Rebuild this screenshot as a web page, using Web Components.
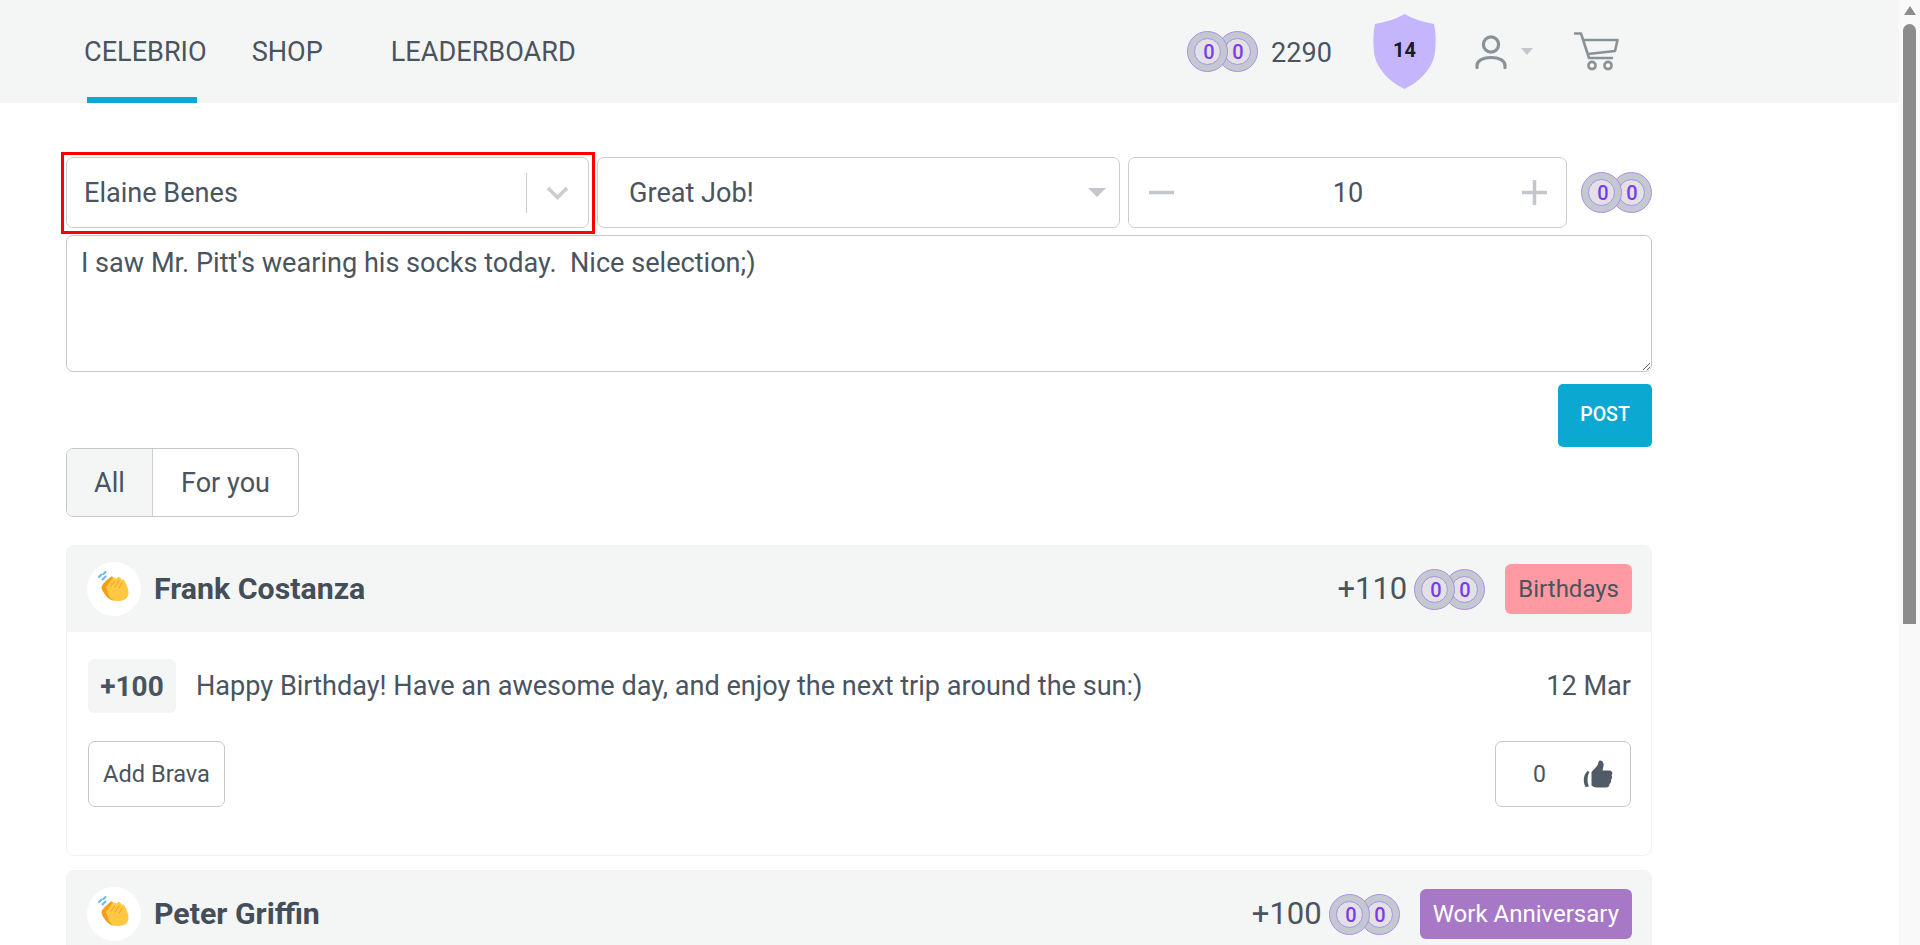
<!DOCTYPE html>
<html lang="en">
<head>
<meta charset="utf-8">
<title>Celebrio</title>
<style>
  html, body { margin: 0; height: 100%; overflow: hidden; }
  body { font-family: Roboto, "Liberation Sans", sans-serif; color: #4a545e; background: #fff; }
</style>
</head>
<body>
<app-shell>
  <top-nav coins="2290" level="14"></top-nav>
  <brava-form></brava-form>
  <feed-tabs></feed-tabs>
  <brava-card name="Frank Costanza" total="+110" tag="Birthdays" tag-color="#ff9aa2" tag-text="#4a545e" points="+100" date="12 Mar" likes="0">
    Happy Birthday! Have an awesome day, and enjoy the next trip around the sun:)
  </brava-card>
  <brava-card name="Peter Griffin" total="+100" tag="Work Anniversary" tag-color="#a678c6" tag-text="#fff"></brava-card>
</app-shell>

<script>
class CoinStack extends HTMLElement {
  constructor() {
    super();
    this.attachShadow({ mode: 'open' });
    this.shadowRoot.innerHTML = `
      <style>
        :host { display: inline-block; width: 71px; height: 41px; flex: none; }
        svg { display: block; }
        text { font: 500 20px Roboto, sans-serif; fill: #7c3aed; text-anchor: middle; }
      </style>
      <svg width="71" height="41" viewBox="0 0 71 41">
        <g>
          <circle cx="50.5" cy="20.5" r="20" fill="#c4c8d0" stroke="#a98fe8"/>
          <circle cx="50.5" cy="20.5" r="13" fill="#e2e1e6" stroke="#a98fe8"/>
          <text x="51" y="27.500">0</text>
        </g>
        <g>
          <circle cx="20.5" cy="20.5" r="20" fill="#c4c8d0" stroke="#a98fe8"/>
          <circle cx="20.5" cy="20.5" r="13" fill="#e2e1e6" stroke="#a98fe8"/>
          <text x="22" y="27.500">0</text>
        </g>
      </svg>
    `;
  }
}

class ClapIcon extends HTMLElement {
  constructor() {
    super();
    this.attachShadow({ mode: 'open' });
    this.shadowRoot.innerHTML = `
      <style>
        :host { display: block; width: 54px; height: 54px; border-radius: 50%; background: #fff; flex: none; }
        svg { display: block; }
      </style>
      <svg width="54" height="54" viewBox="0 0 54 54">
        <path d="M12 15l2.500-2.500M15.500 17.500l3-3M16.500 12l2-2" stroke="#6cb6f0" stroke-width="2" stroke-linecap="round" fill="none"/>
        <g transform="translate(-1 -2)">
          <path d="M15.500 26.500c1.500-3.500 5.500-6.500 9.500-10 2-.5 2.500 1.500 2 3.500l3 20.500c-5 .5-9-2.500-12-7.500-1.500-2-2.500-4-2.500-6.500z" fill="#f59e16"/>
          <path d="M20 27l6-8c1-2 3-2 4 0l1-1c1-2 4-1 4 1l1 1c1-1 3 0 3 2 2 3 3.500 7 3.500 11 0 5-4.500 8-9.500 8-5 0-8-2-10-5z" fill="#ffc843"/>
          <path d="M25 26l4-5M29 27l4-6M33 28l3-5" stroke="#f0a020" stroke-width="1" stroke-linecap="round" fill="none"/>
        </g>
      </svg>
    `;
  }
}

class TopNav extends HTMLElement {
  constructor() {
    super();
    this.attachShadow({ mode: 'open' });
  }

  connectedCallback() {
    this.shadowRoot.innerHTML = `
      <style>
        :host { display: flex; align-items: center; height: 103px; background: #f4f6f6; padding: 0 280px 0 84px; font-size: 27.100px; color: #4a545e; }
        .tab { position: relative; height: 103px; line-height: 105px; }
        .tab.active::after { content: ""; position: absolute; left: 3px; bottom: 0; width: 110px; height: 6px; background: #0ba8d2; }
        .shop { margin-left: 45px; }
        .board { margin-left: 68px; }
        .right { margin-left: auto; display: flex; align-items: center; }
        .count { margin-left: 13px; line-height: 36px; padding-top: 2px; }
        .shield { position: relative; margin-left: 41px; width: 63px; height: 75px; }
        .shield span { position: absolute; inset: 0 0 4px; display: flex; align-items: center; justify-content: center; font-weight: 700; font-size: 20px; color: #1b1b26; }
        .user { margin-left: 39px; }
        .caret { margin-left: 14px; width: 0; height: 0; border: 6.5px solid transparent; border-top: 7px solid #c3c7cb; border-bottom: 0; }
        .cart { margin-left: 41px; }
        svg { display: block; }
      </style>
      <div class="tab active">CELEBRIO</div>
      <div class="tab shop">SHOP</div>
      <div class="tab board">LEADERBOARD</div>
      <div class="right">
        <coin-stack></coin-stack>
        <div class="count">${this.getAttribute('coins')}</div>
        <div class="shield">
          <svg width="63" height="75" viewBox="0 0 63 75"><path d="M31.500 0C40 5 50 8 61 10c2 8 2 18 1 28C60 55 46 68 31.500 75 17 68 3 55 1 38 0 28 0 18 2 10 13 8 23 5 31.500 0z" fill="#c4b5fd"/></svg>
          <span>${this.getAttribute('level')}</span>
        </div>
        <svg class="user" width="32" height="34" viewBox="0 0 32 34" fill="none" stroke="#8a9197" stroke-width="3.200" stroke-linecap="round">
          <circle cx="16" cy="9.500" r="7.600"/>
          <path d="M2 32.500v-2c0-5 6-8 14-8s14 3 14 8v2"/>
        </svg>
        <div class="caret"></div>
        <svg class="cart" width="45" height="39" viewBox="0 0 45 39" fill="none" stroke="#8a9197" stroke-width="2.600" stroke-linejoin="round">
          <path d="M0 1.500h7l8 24.500h24"/>
          <path d="M9.500 8H43.500l-2.500 11-27 3"/>
          <circle cx="18" cy="33.500" r="3.600"/>
          <circle cx="34" cy="33.500" r="3.600"/>
        </svg>
      </div>
    `;
  }
}

class BravaForm extends HTMLElement {
  constructor() {
    super();
    this.attachShadow({ mode: 'open' });
    this.shadowRoot.innerHTML = `
      <style>
        :host { display: block; font-size: 27.100px; color: #4a545e; }
        .row { display: grid; grid-template-columns: 523px 523px 439px 71px; column-gap: 8px; align-items: center; }
        .box { box-sizing: border-box; height: 71px; border: 1px solid #cbced1; border-radius: 7px; display: flex; align-items: center; background: #fff; }
        .person { position: relative; padding: 0 17px 0 17px; }
        .person::after { content: ""; position: absolute; left: -6px; right: -7px; top: -6px; bottom: -7px; border: 3px solid #f00; pointer-events: none; }
        .sep { margin-left: auto; width: 1px; height: 40px; background: #ccc; }
        .chev { margin-left: 19px; margin-right: 2px; }
        .kudos { padding: 0 13px 0 31px; }
        .caret { margin-left: auto; width: 0; height: 0; border: 9px solid transparent; border-top: 9px solid #c3c7cb; border-bottom: 0; }
        .qty { padding: 0 19px 0 20px; justify-content: space-between; }
        .step { display: block; flex: none; }
        .num { flex: 1; text-align: center; }
        .coins { margin-left: 6px; }
        textarea { display: block; box-sizing: border-box; width: 100%; height: 137px; margin-top: 7px; padding: 11px 14px; border: 1px solid #c4c8cc; border-radius: 7px; font: 27.100px/32px Roboto, sans-serif; color: #4a545e; outline: none; }
        .actions { display: flex; justify-content: flex-end; margin-top: 12px; }
        .post { box-sizing: border-box; width: 94px; height: 63px; padding: 0 0 2px; border: 0; border-radius: 5px; background: #0ba8d2; color: #fff; font: 500 19.500px Roboto, sans-serif; }
      </style>
      <div class="row">
        <div class="box person">
          <span>Elaine Benes</span>
          <div class="sep"></div>
          <svg class="chev" width="23" height="14" viewBox="0 0 23 14" fill="none" stroke="#ccc" stroke-width="3.500"><path d="M2 2l9.500 9.500L21 2"/></svg>
        </div>
        <div class="box kudos">
          <span>Great Job!</span>
          <div class="caret"></div>
        </div>
        <div class="box qty">
          <svg class="step" width="25" height="25" viewBox="0 0 25 25"><path d="M0 12.500h25" stroke="#c3c7cb" stroke-width="3.500"/></svg>
          <div class="num">10</div>
          <svg class="step" width="25" height="25" viewBox="0 0 25 25"><path d="M0 12.500h25M12.500 0v25" stroke="#c3c7cb" stroke-width="3.500"/></svg>
        </div>
        <coin-stack class="coins"></coin-stack>
      </div>
      <textarea>I saw Mr. Pitt's wearing his socks today.  Nice selection;)</textarea>
      <div class="actions"><button class="post">POST</button></div>
    `;
  }
}

class FeedTabs extends HTMLElement {
  constructor() {
    super();
    this.attachShadow({ mode: 'open' });
    this.shadowRoot.innerHTML = `
      <style>
        :host { display: flex; width: max-content; height: 69px; margin: 1px 0 28px; box-sizing: border-box; border: 1px solid #c4c8cc; border-radius: 7px; font-size: 27.100px; color: #4a545e; overflow: hidden; }
        div { display: flex; align-items: center; justify-content: center; }
        .all { width: 85px; background: #f4f6f6; border-right: 1px solid #cdd0d3; }
        .you { width: 145px; }
      </style>
      <div class="all">All</div>
      <div class="you">For you</div>
    `;
  }
}

class BravaCard extends HTMLElement {
  constructor() {
    super();
    this.attachShadow({ mode: 'open' });
  }

  connectedCallback() {
    const attr = name => this.getAttribute(name);
    const body = attr('points') ? `
      <div class="body">
        <div class="line">
          <div class="chip">${attr('points')}</div>
          <div class="msg"><slot></slot></div>
          <div class="date">${attr('date')}</div>
        </div>
        <div class="line btns">
          <div class="btn add">Add Brava</div>
          <div class="btn like">
            <span>${attr('likes')}</span>
            <svg width="31" height="28" viewBox="0 0 31 28" fill="#515b65">
              <path d="M9.500 12l5.500-6c1.500-2 1-4 2.500-5.500 3-.5 4.500 2.500 4 5.500l-1 4.500h7c3 0 3.500 3.500 2 5 1 1.500.5 3.500-.5 4.500.5 2-.5 3.500-1.500 4 0 2.500-1.500 3.500-3.500 3.500H15c-2.500 0-4-1-5.500-2z"/>
              <path d="M5.500 11C1 15 1 22 3.500 27L7 26.500C5 22 5 16 7.500 12z"/>
            </svg>
          </div>
        </div>
      </div>` : '';
    this.shadowRoot.innerHTML = `
      <style>
        :host { display: block; box-sizing: border-box; border: 1px solid #f1f3f3; border-radius: 8px; overflow: hidden; font-size: 27.100px; color: #4a545e; margin-bottom: 14px; }
        .head { display: flex; align-items: center; height: 86px; padding: 0 19px 0 20px; background: #f4f6f6; }
        .name { margin-left: 13px; padding-bottom: 2px; font-size: 30.300px; font-weight: 700; color: #444e58; }
        .total { margin-left: auto; padding-bottom: 2px; font-size: 31px; color: #4a545e; }
        coin-stack { margin-left: 7px; }
        .tag { margin-left: 20px; height: 50px; padding: 0 13px; border-radius: 6px; display: flex; align-items: center; font-size: 24px; }
        .body { padding: 27px 20px 48px 21px; }
        .line { display: flex; align-items: center; }
        .chip { width: 88px; height: 54px; border-radius: 6px; background: #f4f6f6; display: flex; align-items: center; justify-content: center; font-size: 28px; font-weight: 700; }
        .msg { margin-left: 20px; }
        .date { margin-left: auto; }
        .btns { justify-content: space-between; margin-top: 28px; }
        .btn { box-sizing: border-box; height: 66px; border: 1px solid #c4c8cc; border-radius: 7px; display: flex; align-items: center; font-size: 23px; }
        .add { width: 137px; justify-content: center; font-size: 23.600px; }
        .like { width: 136px; padding: 0 17px 0 37px; justify-content: space-between; }
      </style>
      <div class="head">
        <clap-icon></clap-icon>
        <div class="name">${attr('name')}</div>
        <div class="total">${attr('total')}</div>
        <coin-stack></coin-stack>
        <div class="tag" style="background:${attr('tag-color')};color:${attr('tag-text')}">${attr('tag')}</div>
      </div>
      ${body}
    `;
  }
}

class AppShell extends HTMLElement {
  constructor() {
    super();
    this.attachShadow({ mode: 'open' });
    this.shadowRoot.innerHTML = `
      <style>
        :host { display: flex; height: 945px; overflow: hidden; }
        .page { width: 1899px; flex: none; }
        .bar { width: 21px; flex: none; background: #f9f9f9; padding-top: 6px; box-sizing: border-box; }
        .arrow { width: 0; height: 0; margin: 0 auto; border: 6px solid transparent; border-bottom: 9px solid #8c8c8c; border-top: 0; }
        .thumb { width: 13px; height: 600px; margin: 9px auto 0; background: #8c8c8c; border-radius: 7px 7px 0 0; }
        .content { width: 1586px; margin-left: 66px; padding-top: 54px; }
      </style>
      <div class="page">
        <slot name="nav"></slot>
        <div class="content"><slot></slot></div>
      </div>
      <div class="bar"><div class="arrow"></div><div class="thumb"></div></div>
    `;
  }

  connectedCallback() {
    this.querySelector('top-nav').slot = 'nav';
  }
}

customElements.define('coin-stack', CoinStack);
customElements.define('clap-icon', ClapIcon);
customElements.define('top-nav', TopNav);
customElements.define('brava-form', BravaForm);
customElements.define('feed-tabs', FeedTabs);
customElements.define('brava-card', BravaCard);
customElements.define('app-shell', AppShell);
</script>
</body>
</html>
